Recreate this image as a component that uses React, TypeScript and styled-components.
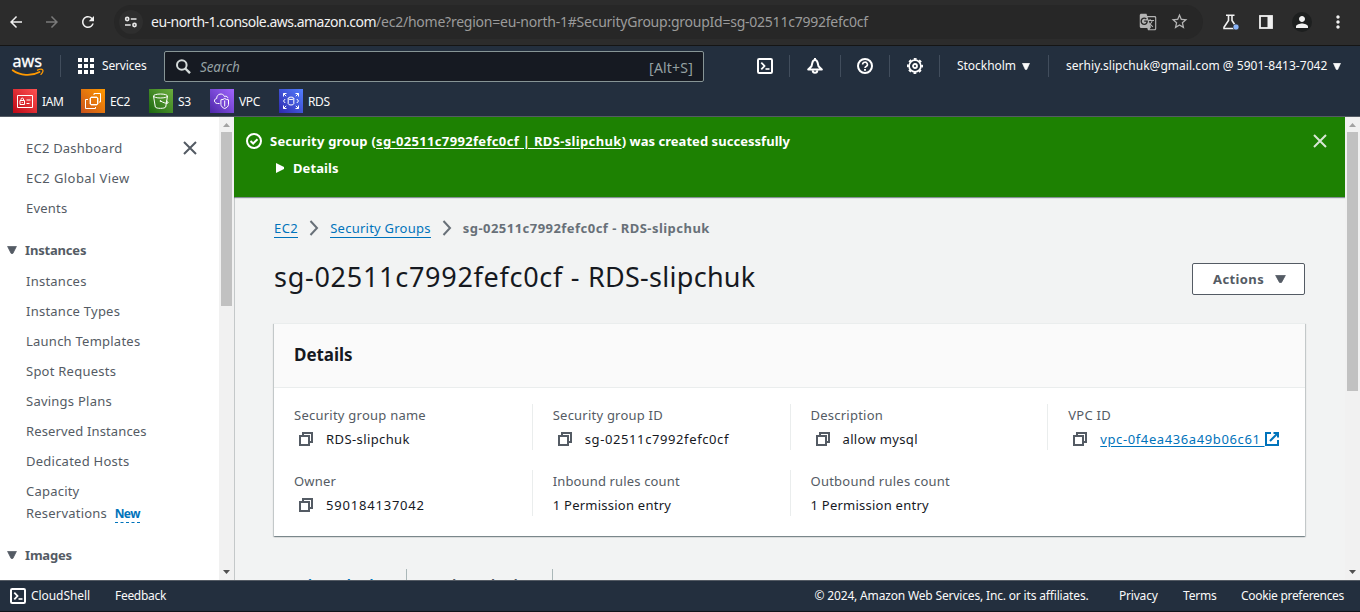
import React from 'react';
import styled, { createGlobalStyle } from 'styled-components';
import { MdArrowBack, MdArrowForward, MdRefresh, MdGTranslate, MdStarBorder, MdPerson, MdMoreVert } from 'react-icons/md';

const GlobalStyle = createGlobalStyle`
  * { box-sizing: border-box; }
  body { margin: 0; background: #f2f3f3; }
  svg { display: block; flex: none; }
`;

const Screen = styled.div`
  display: flex;
  flex-direction: column;
  width: 1360px;
  height: 612px;
  overflow: hidden;
  font-family: 'Noto Sans', sans-serif;
  font-size: 13px;
  color: #16191f;
  white-space: nowrap;
`;

/* ---------- browser bar ---------- */

const BrowserBar = styled.div`
  display: flex;
  align-items: center;
  flex: none;
  height: 46px;
  padding: 0 13px 2px 7px;
  background: #2c2c2c;
  border-bottom: 1px solid #151515;
  color: #f1f1f1;
`;

const NavButton = styled.span<{ $dim?: boolean }>`
  display: flex;
  justify-content: center;
  width: 18px;
  margin-right: 18px;
  color: ${(p) => (p.$dim ? '#7a7a7a' : '#f1f1f1')};
`;

const AddressBar = styled.div`
  display: flex;
  align-items: center;
  width: 1089px;
  height: 34px;
  margin: 0 20px 0 -1px;
  padding: 0 14px 0 5px;
  border-radius: 17px;
  background: #272727;
`;

const SiteInfo = styled.span`
  display: flex;
  align-items: center;
  justify-content: center;
  width: 24px;
  height: 24px;
  margin-right: 8px;
  border-radius: 50%;
  background: #2e2e2e;
`;

const Url = styled.span`
  flex: 1;
  font-size: 14px;
  line-height: 20px;
  letter-spacing: -0.24px;
  color: #9b9b9b;
`;

const UrlHost = styled.span`
  letter-spacing: -0.515px;
  color: #f1f1f1;
`;

const AddressActions = styled.span`
  display: flex;
  align-items: center;
  gap: 13px;
  color: #b4b4b4;
`;

const BrowserTools = styled.span`
  display: flex;
  align-items: center;
  flex: 1;
`;

const Avatar = styled.span`
  display: flex;
  align-items: center;
  justify-content: center;
  width: 20px;
  height: 20px;
  margin: 0 17px 0 19px;
  border-radius: 50%;
  background: #1d1f1f;
`;

const DotsSlot = styled.span`
  display: flex;
  justify-content: center;
  width: 18px;
`;

/* ---------- console header ---------- */

const ConsoleHeader = styled.header`
  flex: none;
  height: 71px;
  background: #232f3e;
  border-bottom: 1px solid #545b64;
  color: #fafafa;
  font-size: 12px;
`;

const TopRow = styled.div`
  display: flex;
  align-items: center;
  height: 40px;
  padding-left: 11px;
`;

const HeaderDivider = styled.i<{ $before: number; $after: number }>`
  flex: none;
  width: 1px;
  height: 22px;
  margin: 0 ${(p) => p.$after}px 0 ${(p) => p.$before}px;
  background: #414d5c;
`;

const Services = styled.span`
  display: flex;
  align-items: center;
  gap: 8px;
  width: 86px;
  letter-spacing: -0.16px;
`;

const SearchBox = styled.div`
  display: flex;
  align-items: center;
  width: 540px;
  height: 31px;
  margin-right: 53px;
  padding: 1px 10px 0 11px;
  border: 1px solid #879596;
  border-radius: 2px;
  background: #161a22;
  color: #95a1a3;
  font-size: 14px;
`;

const Placeholder = styled.em`
  flex: 1;
  margin-left: 9px;
  padding-top: 1px;
  font-size: 13.5px;
  letter-spacing: -0.1px;
`;

const Shortcut = styled.span`
  letter-spacing: 0.2px;
  padding-top: 1px;
`;

const HeaderMenu = styled.span<{ $width: number; $ls: number }>`
  display: flex;
  align-items: center;
  justify-content: space-between;
  width: ${(p) => p.$width}px;
  letter-spacing: ${(p) => p.$ls}px;
`;

const MenuLabel = styled.span`
  padding-bottom: 2px;
`;

const FavoritesRow = styled.div`
  display: flex;
  align-items: center;
  height: 30px;
  padding-left: 13px;
`;

const Favorite = styled.span<{ $width: number }>`
  display: flex;
  align-items: center;
  gap: 5px;
  width: ${(p) => p.$width}px;
  letter-spacing: -0.35px;
`;

/* ---------- body ---------- */

const Body = styled.div`
  display: flex;
  flex: 1;
  min-height: 0;
`;

const SideNav = styled.nav`
  position: relative;
  width: 219px;
  padding-top: 16px;
  overflow: hidden;
  background: #fff;
  color: #545b64;
`;

const NavItem = styled.a<{ $ls?: number }>`
  display: block;
  height: 30px;
  padding-left: 26px;
  line-height: 30px;
  letter-spacing: ${(p) => p.$ls ?? 0.22}px;
`;

const WrappedItem = styled.a`
  display: block;
  height: 52px;
  padding: 4px 60px 4px 26px;
  line-height: 22px;
  letter-spacing: 0.22px;
  white-space: normal;
`;

const NewTag = styled.span`
  display: inline-block;
  margin-left: 4px;
  height: 18px;
  line-height: 17px;
  border-bottom: 1px dashed #0073bb;
  color: #0073bb;
  font-size: 12px;
  font-weight: 700;
  letter-spacing: -0.6px;
`;

const NavHeading = styled.div`
  display: flex;
  align-items: center;
  gap: 8px;
  height: 22px;
  margin: 16px 0 5px;
  padding-left: 7px;
  font-weight: 700;
  letter-spacing: -0.18px;
`;

const CloseNav = styled.span`
  position: absolute;
  top: 24px;
  left: 183px;
`;

const ScrollTrack = styled.div`
  display: flex;
  flex-direction: column;
  align-items: center;
  flex: none;
  width: 15px;
  background: #f1f1f1;
`;

const ScrollThumb = styled.i<{ $size: number }>`
  width: 11px;
  height: ${(p) => p.$size}px;
  margin-bottom: auto;
  background: #c1c1c1;
`;

const ScrollButton = styled.i<{ $down?: boolean }>`
  display: flex;
  align-items: center;
  justify-content: center;
  height: ${(p) => (p.$down ? 16 : 15)}px;
`;

const Content = styled.main`
  flex: 1;
  min-width: 0;
  overflow: hidden;
  background: #f2f3f3;
`;

const Flash = styled.section`
  position: relative;
  display: flex;
  height: 80px;
  padding: 13px 18px 0 12px;
  background: #1d8102;
  box-shadow: 0 1px 1px rgba(0, 28, 36, 0.45);
  color: #fff;
  font-weight: 700;
`;

const FlashIcon = styled.span`
  padding-top: 3px;
  margin-right: 8px;
`;

const FlashText = styled.div`
  flex: 1;
  line-height: 22px;
  letter-spacing: 0.215px;
`;

const FlashLink = styled.a`
  text-decoration: underline;
  text-underline-offset: 2px;
  letter-spacing: 0.34px;
`;

const FlashTail = styled.span`
  letter-spacing: 0.04px;
`;

const FlashDetails = styled.div`
  display: flex;
  align-items: center;
  gap: 9px;
  height: 22px;
  margin-top: 5px;
  padding-left: 6px;
  letter-spacing: 0.07px;
`;

const FlashClose = styled.span`
  padding-top: 4px;
`;

const Page = styled.div`
  height: 383px;
  padding: 20px 40px 0 39px;
  border-left: 1px solid #c4c8c9;
`;

const Breadcrumbs = styled.div`
  display: flex;
  align-items: center;
  height: 22px;
  line-height: 19px;
  color: #687078;
`;

const Crumb = styled.a<{ $ls: number }>`
  border-bottom: 1px solid #0073bb;
  color: #0073bb;
  letter-spacing: ${(p) => p.$ls}px;
  height: 20px;
  line-height: 20px;
`;

const CurrentCrumb = styled.span`
  font-weight: 700;
  letter-spacing: 0.47px;
`;

const ChevronSlot = styled.span`
  display: flex;
  justify-content: center;
  width: 32px;
`;

const TitleRow = styled.div`
  display: flex;
  justify-content: space-between;
  height: 84px;
  padding-top: 23px;
`;

const Title = styled.h1`
  margin: 0;
  font-size: 27px;
  font-weight: 400;
  line-height: 30px;
  letter-spacing: 0.72px;
`;

const TitleName = styled.span`
  letter-spacing: 0.28px;
`;

const ActionsButton = styled.button`
  display: flex;
  align-items: center;
  justify-content: space-between;
  width: 113px;
  height: 32px;
  margin-top: 1px;
  padding: 0 18px 0 20px;
  border: 1px solid #545b64;
  border-radius: 2px;
  background: #fff;
  color: #545b64;
  font: 700 13px 'Noto Sans', sans-serif;
  letter-spacing: 0.4px;
`;

const Card = styled.section`
  height: 213px;
  border-top: 1px solid #eaeded;
  background: #fff;
  box-shadow: 0 1px 1px 0 rgba(0, 28, 36, 0.3), 1px 1px 1px 0 rgba(0, 28, 36, 0.15), -1px 1px 1px 0 rgba(0, 28, 36, 0.15);
`;

const CardHeader = styled.h2`
  display: flex;
  align-items: center;
  height: 64px;
  margin: 0;
  padding: 0 20px 2px;
  border-bottom: 1px solid #eaeded;
  background: #fafafa;
  font-size: 17px;
  font-weight: 700;
  letter-spacing: -0.05px;
`;

const FieldGrid = styled.div`
  display: grid;
  grid-template-columns: repeat(4, 1fr);
  grid-auto-rows: 46px;
  row-gap: 20px;
  padding-top: 16px;
`;

const Field = styled.div<{ $first?: boolean }>`
  padding-left: 20px;
  border-left: ${(p) => (p.$first ? '0' : '1px solid #eaeded')};
`;

const FieldLabel = styled.div<{ $ls: number }>`
  height: 22px;
  line-height: 22px;
  color: #545b64;
  letter-spacing: ${(p) => p.$ls}px;
`;

const FieldValue = styled.div<{ $ls: number; $copy?: boolean }>`
  display: flex;
  align-items: center;
  gap: 13px;
  height: 26px;
  padding-left: ${(p) => (p.$copy ? 5 : 0)}px;
  letter-spacing: ${(p) => p.$ls}px;
`;

const ValueLink = styled.a`
  display: flex;
  align-items: center;
  color: #0073bb;
  text-decoration: underline;
  text-underline-offset: 2px;
  white-space: pre;
`;

const Tabs = styled.div`
  display: flex;
  margin-top: 33px;
`;

const Tab = styled.span<{ $active?: boolean; $width: number }>`
  width: ${(p) => p.$width}px;
  height: 30px;
  padding-left: 20px;
  border-right: 1px solid #aab7b8;
  color: ${(p) => (p.$active ? '#0073bb' : '#545b64')};
  font-weight: 700;
  line-height: 30px;
  letter-spacing: 0.3px;
`;

/* ---------- footer ---------- */

const Footer = styled.footer`
  display: flex;
  align-items: center;
  flex: none;
  height: 32px;
  padding: 0 16px 0 10px;
  border-top: 1px solid #545b64;
  border-bottom: 1px solid #10151c;
  background: #232f3e;
  color: #fafafa;
  font-size: 12px;
`;

const ShellLink = styled.span`
  display: flex;
  align-items: center;
  gap: 5px;
  width: 105px;
  letter-spacing: -0.07px;
`;

const FooterText = styled.span<{ $ls: number; $width?: number }>`
  width: ${(p) => (p.$width ? `${p.$width}px` : 'auto')};
  padding-bottom: 2px;
  letter-spacing: ${(p) => p.$ls}px;
`;

const Spacer = styled.span`
  flex: 1;
`;

/* ---------- icons ---------- */

const Down = ({ w, h }: { w: number; h: number }) => (
  <svg width={w} height={h} viewBox="0 0 10 8" preserveAspectRatio="none"><path d="M0.6 0.4h8.8L5.9 7.4H4.1z" fill="currentColor" stroke="currentColor" strokeWidth=".8" strokeLinejoin="round" /></svg>
);

const Cross = ({ color }: { color: string }) => (
  <svg width="14" height="14" viewBox="0 0 14 14"><path d="M1 1l12 12M13 1L1 13" stroke={color} strokeWidth="2" /></svg>
);

const Chevron = () => (
  <svg width="10" height="16" viewBox="0 0 10 16"><path d="M1.5 1l6.5 7-6.5 7" fill="none" stroke="#687078" strokeWidth="2" /></svg>
);

const Copy = () => (
  <svg width="14" height="14" viewBox="0 0 14 14" fill="none" stroke="#545b64" strokeWidth="2">
    <path d="M1 4h9v9H1z" /><path d="M4 4V1h9v9h-3" />
  </svg>
);

const External = () => (
  <svg width="14" height="14" viewBox="0 0 14 14" fill="none" stroke="#0073bb" strokeWidth="2">
    <path d="M6 1H1v12h12V8" /><path d="M8.500 1H13v4.500M12.700 1.300L5 9" />
  </svg>
);

const Shell = () => (
  <svg width="16" height="16" viewBox="0 0 16 16" fill="none" stroke="#fff" strokeWidth="2">
    <rect x="1" y="1" width="14" height="14" rx="1.200" /><path d="M4.300 4.600L7.500 8l-3.200 3.400" strokeWidth="1.800" /><path d="M8.500 11h4" strokeWidth="1.600" />
  </svg>
);

const Bell = () => (
  <svg width="16" height="16" viewBox="0 0 16 16" fill="none" stroke="#fff" strokeWidth="2" strokeLinejoin="round">
    <path d="M1.200 11.500L4.500 8.300 5.300 5C5.700 3.200 6.500 2 8 2s2.300 1.200 2.700 3l.8 3.300 3.300 3.200z" /><path d="M5.700 12.300a2.300 2.500 0 0 0 4.600 0" /><path d="M8 0v2" />
  </svg>
);

const Help = () => (
  <svg width="16" height="16" viewBox="0 0 16 16" fill="none" stroke="#fff" strokeWidth="2">
    <circle cx="8" cy="8" r="7" /><path d="M5.600 6.500a2.400 2.300 0 1 1 3.500 2C8.300 9 8 9.300 8 10" strokeWidth="1.600" /><path d="M8 11v1.700" strokeWidth="1.900" />
  </svg>
);

const Gear = () => (
  <svg width="16" height="16" viewBox="0 0 16 16" fill="none" stroke="#fff">
    <circle cx="8" cy="8" r="7.100" strokeWidth="1.800" strokeDasharray="2.800 2.776" strokeDashoffset="1.400" />
    <circle cx="8" cy="8" r="5.900" strokeWidth="1.700" />
    <circle cx="8" cy="8" r="2" strokeWidth="1.800" />
  </svg>
);

const AppGrid = () => (
  <svg width="16" height="16" viewBox="0 0 16 16" fill="#fff">
    {[0, 6, 12].map((y) => [0, 6, 12].map((x) => <rect key={`${x}-${y}`} x={x} y={y} width="4" height="4" />))}
  </svg>
);

const SearchGlass = () => (
  <svg width="15" height="15" viewBox="0.5 0 15 15" fill="none" stroke="#d5dbdb" strokeWidth="2">
    <circle cx="6.300" cy="6" r="4.800" /><path d="M9.800 9.500l4.700 4.700" strokeWidth="2.400" />
  </svg>
);

const AwsLogo = () => (
  <svg width="34" height="36" viewBox="0 -7 34 36">
    <text x="1.500" y="12" fill="#fff" stroke="#fff" strokeWidth=".3" fontFamily="Noto Sans, sans-serif" fontSize="17" textLength="29.500" lengthAdjust="spacingAndGlyphs">aws</text>
    <path d="M1.700 15.300C9 20.800 20.500 21.500 28.500 17" fill="none" stroke="#f90" strokeWidth="1.800" strokeLinecap="round" />
    <path d="M26.500 15.200c2-.9 4.600-1 5.200-.3.500.8-.3 3-1.700 4.500" fill="none" stroke="#f90" strokeWidth="1.300" strokeLinecap="round" />
  </svg>
);

const Tune = () => (
  <svg width="14" height="12" viewBox="0 0 14 12" fill="none" stroke="#e8e8e8" strokeWidth="1.600">
    <circle cx="3.200" cy="3" r="1.600" /><path d="M6.800 3h5.700M1 9h5.700" /><circle cx="10.500" cy="9" r="1.600" />
  </svg>
);

const Flask = () => (
  <svg width="16" height="16" viewBox="0 0 16 16" fill="none" stroke="#f1f1f1" strokeWidth="1.600">
    <path d="M3 1.300h8.500M5.500 1.300v5.200L1 13.300v1.200h12.500v-1.200L9 6.500V1.300" /><circle cx="13" cy="13" r="3" fill="#8ab4f8" stroke="#2c2c2c" strokeWidth=".6" />
  </svg>
);

const SidePanel = () => (
  <svg width="14" height="14" viewBox="0 0 14 14"><rect x="1" y="1" width="12" height="12" fill="none" stroke="#f1f1f1" strokeWidth="1.800" /><path d="M8.500 1H13v12H8.500z" fill="#f1f1f1" /></svg>
);

const CheckCircle = () => (
  <svg width="16" height="16" viewBox="0 0 16 16" fill="none" stroke="#fff" strokeWidth="2"><circle cx="8" cy="8" r="7" /><path d="M4.500 8l2.700 2.500 4.300-4.300" /></svg>
);

const ScrollArrow = ({ down }: { down?: boolean }) => (
  <svg width="7" height="4" viewBox="0 0 7 4"><path d={down ? 'M0 0h7L3.500 4z' : 'M0 4h7L3.500 0z'} fill={down ? '#505050' : '#a3a3a3'} /></svg>
);

type Kind = 'iam' | 'ec2' | 's3' | 'vpc' | 'rds';

const tileColors: Record<Kind, [string, string]> = {
  iam: ['#bd0816', '#ff5252'],
  ec2: ['#c8511b', '#f90'],
  s3: ['#1b660f', '#6cae3e'],
  vpc: ['#4d27a8', '#a166ff'],
  rds: ['#2e27ad', '#527fff'],
};

const tileArt: Record<Kind, React.ReactNode> = {
  iam: (
    <>
      <path d="M4.500 6.500h15v12h-15z" /><path d="M7 11.500h4.500v4H7zM8 11.500V10a1.300 1.300 0 0 1 2.500 0v1.500M9.200 13v1M13.500 11h4M13.500 14.500h3" />
    </>
  ),
  ec2: (
    <>
      <path d="M9.500 8.500h7v7h-7z" />
      <path d="M11 8.500V7M13 8.500V7M15 8.500V7M11 17v-1.500M13 17v-1.500M15 17v-1.500M9.500 10H8M9.500 12H8M9.500 14H8M18 10h-1.500M18 12h-1.500M18 14h-1.500" strokeWidth=".8" />
      <path d="M14.500 18v1.500h-10v-9H7M13 6V4.500h6.500V13H18" />
    </>
  ),
  s3: (
    <>
      <ellipse cx="11.500" cy="7" rx="7" ry="2" /><path d="M4.500 7l1.800 11c.8 1.800 9.600 1.800 10.400 0l1.800-11" /><path d="M11.500 12c2.500 1.500 6.500 3 7.500 2 .5-.7-.7-1.600-1.700-2.200" /><circle cx="11.500" cy="12" r=".5" />
    </>
  ),
  vpc: (
    <>
      <path d="M9.500 14.500H7.500c-4-.3-3.800-4.800-.8-5C6.500 4.500 13 3.500 14.500 7.500c2-.9 3.300.3 3.300 1.700" />
      <path d="M14.700 9.500c1 .8 2.300 1.200 3.800 1.300v4.500c0 2-1.800 3.500-3.800 4.200-2-.7-3.800-2.200-3.800-4.200v-4.500c1.500-.1 2.800-.5 3.800-1.300z" />
      <path d="M14.700 11.500v6" />
    </>
  ),
  rds: (
    <>
      <ellipse cx="12" cy="9.300" rx="2.800" ry="1.200" /><path d="M9.200 9.300v5.500c0 1.600 5.600 1.600 5.600 0V9.300" />
      <path d="M4.500 7.500v-3h3M4.500 4.500l2.700 2.700M16.500 4.500h3v3M19.500 4.500l-2.700 2.700M4.500 16.500v3h3M4.500 19.500l2.700-2.700M16.500 19.500h3v-3M19.500 19.500l-2.700-2.700M6.200 10L4.500 12l1.700 2M17.800 10l1.700 2-1.700 2" />
    </>
  ),
};

const ServiceTile = ({ kind }: { kind: Kind }) => (
  <svg width="24" height="24" viewBox="0 0 24 24">
    <defs>
      <linearGradient id={`tile-${kind}`} x1="0" y1="1" x2="1" y2="0">
        <stop offset="0" stopColor={tileColors[kind][0]} /><stop offset="1" stopColor={tileColors[kind][1]} />
      </linearGradient>
    </defs>
    <rect width="24" height="24" fill={`url(#tile-${kind})`} />
    <g fill="none" stroke="#fff" strokeWidth="1">{tileArt[kind]}</g>
  </svg>
);

const favorites: { kind: Kind; name: string; width: number }[] = [
  { kind: 'iam', name: 'IAM', width: 68 },
  { kind: 'ec2', name: 'EC2', width: 68 },
  { kind: 's3', name: 'S3', width: 61 },
  { kind: 'vpc', name: 'VPC', width: 69 },
  { kind: 'rds', name: 'RDS', width: 60 },
];

const instanceLinks = ['Instances', 'Instance Types', 'Launch Templates', 'Spot Requests', 'Savings Plans', 'Reserved Instances', 'Dedicated Hosts'];

const Scrollbar = ({ size }: { size: number }) => (
  <ScrollTrack>
    <ScrollButton><ScrollArrow /></ScrollButton>
    <ScrollThumb $size={size} />
    <ScrollButton $down><ScrollArrow down /></ScrollButton>
  </ScrollTrack>
);

export default function App() {
  return (
    <Screen>
      <GlobalStyle />
      <BrowserBar>
        <NavButton><MdArrowBack size={18} /></NavButton>
        <NavButton $dim><MdArrowForward size={18} /></NavButton>
        <NavButton><MdRefresh size={18} /></NavButton>
        <AddressBar>
          <SiteInfo><Tune /></SiteInfo>
          <Url>
            <UrlHost>eu-north-1.console.aws.amazon.com</UrlHost>
            /ec2/home?region=eu-north-1#SecurityGroup:groupId=sg-02511c7992fefc0cf
          </Url>
          <AddressActions><MdGTranslate size={18} /><MdStarBorder size={19} /></AddressActions>
        </AddressBar>
        <BrowserTools>
          <Flask />
          <Spacer />
          <SidePanel />
          <Avatar><MdPerson size={18} /></Avatar>
          <DotsSlot><MdMoreVert size={20} /></DotsSlot>
        </BrowserTools>
      </BrowserBar>

      <ConsoleHeader>
        <TopRow>
          <AwsLogo />
          <HeaderDivider $before={15} $after={17} />
          <Services><AppGrid /><MenuLabel>Services</MenuLabel></Services>
          <SearchBox>
            <SearchGlass />
            <Placeholder>Search</Placeholder>
            <Shortcut>[Alt+S]</Shortcut>
          </SearchBox>
          <Shell />
          <HeaderDivider $before={16} $after={17} />
          <Bell />
          <HeaderDivider $before={17} $after={16} />
          <Help />
          <HeaderDivider $before={16} $after={17} />
          <Gear />
          <HeaderDivider $before={16} $after={17} />
          <HeaderMenu $width={73} $ls={-0.04}><MenuLabel>Stockholm</MenuLabel><Down w={8} h={7} /></HeaderMenu>
          <HeaderDivider $before={18} $after={17} />
          <HeaderMenu $width={275} $ls={0.03}><MenuLabel>serhiy.slipchuk@gmail.com @ 5901-8413-7042</MenuLabel><Down w={8} h={7} /></HeaderMenu>
        </TopRow>
        <FavoritesRow>
          {favorites.map((f) => (
            <Favorite key={f.kind} $width={f.width}><ServiceTile kind={f.kind} />{f.name}</Favorite>
          ))}
        </FavoritesRow>
      </ConsoleHeader>

      <Body>
        <SideNav>
          <CloseNav><Cross color="#545b64" /></CloseNav>
          <NavItem>EC2 Dashboard</NavItem>
          <NavItem $ls={0.42}>EC2 Global View</NavItem>
          <NavItem>Events</NavItem>
          <NavHeading><Down w={10} h={8} />Instances</NavHeading>
          {instanceLinks.map((label) => <NavItem key={label} $ls={label === 'Reserved Instances' ? 0.14 : 0.24}>{label}</NavItem>)}
          <WrappedItem>Capacity Reservations <NewTag>New</NewTag></WrappedItem>
          <NavHeading><Down w={10} h={8} />Images</NavHeading>
        </SideNav>
        <Scrollbar size={174} />
        <Content>
          <Flash>
            <FlashIcon><CheckCircle /></FlashIcon>
            <FlashText>
              Security group (<FlashLink>sg-02511c7992fefc0cf | RDS-slipchuk</FlashLink><FlashTail>) was created successfully</FlashTail>
              <FlashDetails>
                <svg width="8" height="10" viewBox="0 0 8 10"><path d="M0 0l8 4v2l-8 4z" fill="#fff" /></svg>
                Details
              </FlashDetails>
            </FlashText>
            <FlashClose><Cross color="#d8e6d5" /></FlashClose>
          </Flash>
          <Page>
            <Breadcrumbs>
              <Crumb $ls={0.45}>EC2</Crumb>
              <ChevronSlot><Chevron /></ChevronSlot>
              <Crumb $ls={0.24}>Security Groups</Crumb>
              <ChevronSlot><Chevron /></ChevronSlot>
              <CurrentCrumb>sg-02511c7992fefc0cf - RDS-slipchuk</CurrentCrumb>
            </Breadcrumbs>
            <TitleRow>
              <Title>sg-02511c7992fefc0cf - <TitleName>RDS-slipchuk</TitleName></Title>
              <ActionsButton>Actions <Down w={11} h={8} /></ActionsButton>
            </TitleRow>
            <Card>
              <CardHeader>Details</CardHeader>
              <FieldGrid>
                <Field $first>
                  <FieldLabel $ls={0.24}>Security group name</FieldLabel>
                  <FieldValue $copy $ls={0.4}><Copy />RDS-slipchuk</FieldValue>
                </Field>
                <Field>
                  <FieldLabel $ls={0.22}>Security group ID</FieldLabel>
                  <FieldValue $copy $ls={0.6}><Copy />sg-02511c7992fefc0cf</FieldValue>
                </Field>
                <Field>
                  <FieldLabel $ls={0.24}>Description</FieldLabel>
                  <FieldValue $copy $ls={0.35}><Copy />allow mysql</FieldValue>
                </Field>
                <Field>
                  <FieldLabel $ls={0.25}>VPC ID</FieldLabel>
                  <FieldValue $copy $ls={0.61}><Copy /><ValueLink>{'vpc-0f4ea436a49b06c61 '}<External /></ValueLink></FieldValue>
                </Field>
                <Field $first>
                  <FieldLabel $ls={0.2}>Owner</FieldLabel>
                  <FieldValue $copy $ls={0.8}><Copy />590184137042</FieldValue>
                </Field>
                <Field>
                  <FieldLabel $ls={0.14}>Inbound rules count</FieldLabel>
                  <FieldValue $ls={0.24}>1 Permission entry</FieldValue>
                </Field>
                <Field>
                  <FieldLabel $ls={0.24}>Outbound rules count</FieldLabel>
                  <FieldValue $ls={0.24}>1 Permission entry</FieldValue>
                </Field>
              </FieldGrid>
            </Card>
            <Tabs>
              <Tab $active $width={133}>Inbound rules</Tab>
              <Tab $width={146}>Outbound rules</Tab>
            </Tabs>
          </Page>
        </Content>
        <Scrollbar size={259} />
      </Body>

      <Footer>
        <ShellLink><Shell /><MenuLabel>CloudShell</MenuLabel></ShellLink>
        <FooterText $ls={-0.3}>Feedback</FooterText>
        <Spacer />
        <FooterText $ls={-0.164} $width={304.5}>© 2024, Amazon Web Services, Inc. or its affiliates.</FooterText>
        <FooterText $ls={-0.2} $width={64}>Privacy</FooterText>
        <FooterText $ls={-0.2} $width={58}>Terms</FooterText>
        <FooterText $ls={-0.3} $width={103}>Cookie preferences</FooterText>
      </Footer>
    </Screen>
  );
}
